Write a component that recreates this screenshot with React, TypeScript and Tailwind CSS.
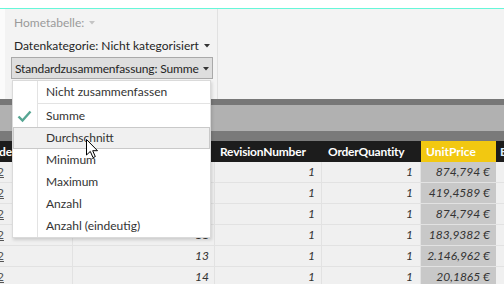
import React from "react";

const font = { fontFamily: 'Lato, "Open Sans", sans-serif' };

function Caret({ color }: { color: string }) {
  return (
    <svg width="6" height="4" viewBox="0 0 6 4" className="inline-block shrink-0">
      <path d="M0 0 L6 0 L3 3.5 Z" fill={color} />
    </svg>
  );
}

const rows = [
  { a: "8", p: "874,794 €" },
  { a: "9", p: "419,4589 €" },
  { a: "10", p: "874,794 €" },
  { a: "11", p: "183,9382 €" },
  { a: "13", p: "2.146,962 €" },
  { a: "14", p: "20,1865 €" },
];

export default function App() {
  return (
    <div className="relative w-[504px] h-[284px] overflow-hidden bg-white text-[12px] text-[#333] whitespace-nowrap" style={font}>
      <div className="h-[8px] bg-white" />
      <div className="h-[1px] bg-[#66f7d9]" />
      {/* ribbon */}
      <div className="flex h-[90px] bg-[#f3f3f3]">
        <div className="w-[5px] bg-[#fbfbfb]" />
        <div className="w-[213px] border-r border-[#e1e1e1] pl-[6px] pt-[5px] flex flex-col">
          <div className="h-[16px] pt-[2px] pl-[3px] text-[#9a9a9a] flex items-center gap-[5px]">
            <span>Hometabelle:</span>
            <Caret color="#c4c4c4" />
          </div>
          <div className="mt-[7px] h-[16px] pt-[1px] pl-[3px] text-[#252525] flex items-center gap-[5px]">
            <span>Datenkategorie: Nicht kategorisiert</span>
            <Caret color="#333" />
          </div>
          <div className="mt-[4px] h-[22px] w-[202px] border border-[#a9a9a9] bg-[#dedede] pl-[3px] pt-[1px] text-[#252525] flex items-center gap-[4px]">
            <span className="tracking-[-0.15px]">Standardzusammenfassung: Summe</span>
            <Caret color="#333" />
          </div>
        </div>
        <div className="flex-1" />
      </div>
      {/* bands */}
      <div className="h-[6px] bg-[#777777]" />
      <div className="h-[26px] bg-[#b1b1b1]" />
      <div className="h-[10px] bg-[#7a7a7a]" />
      {/* table header */}
      <div className="flex h-[21px] bg-[#1c1c1c] text-white font-bold items-center">
        <div className="w-[73px] shrink-0 overflow-hidden"><span className="ml-[-1px]">de</span></div>
        <div className="w-[142px] shrink-0" />
        <div className="w-[107px] shrink-0 pl-[5px] tracking-[-0.2px]">RevisionNumber</div>
        <div className="w-[99px] shrink-0 pl-[6px] tracking-[-0.2px]">OrderQuantity</div>
        <div className="w-[75px] shrink-0 h-full bg-[#f2c811] pl-[5px] flex items-center">UnitPrice</div>
        <div className="flex-1 pl-[4px] text-[#dfeeff]">E</div>
      </div>
      {rows.map((r, i) => (
        <div key={i} className="flex h-[21px] bg-[#f0f0f0] border-b border-[#e2e2e2] italic text-[#333]">
          <div className="w-[73px] shrink-0 border-r border-[#e2e2e2] flex items-center not-italic overflow-hidden">
            <span className="ml-[-3px] underline text-[#555]">2</span>
          </div>
          <div className="w-[142px] shrink-0 border-r border-[#e2e2e2] flex items-center justify-end pr-[5px]">{r.a}</div>
          <div className="w-[107px] shrink-0 border-r border-[#e2e2e2] flex items-center justify-end pr-[6px]">1</div>
          <div className="w-[99px] shrink-0 border-r border-[#e2e2e2] flex items-center justify-end pr-[7px]">1</div>
          <div className="w-[75px] shrink-0 bg-[#c8c8c8] flex items-center justify-end pr-[6px]">{r.p}</div>
          <div className="flex-1" />
        </div>
      ))}
      {/* dropdown menu */}
      <div className="absolute left-[12px] top-[80px] w-[199px] h-[158px] bg-white border border-[#dadada] shadow-[1px_2px_3px_rgba(0,0,0,0.15)]">
        <div className="absolute left-0 top-0 bottom-0 w-[25px] border-r border-[#e3e3e3]" />
        <div className="absolute inset-0 flex flex-col text-[#333]">
          <div className="h-[22px] flex items-center pl-[33px]">Nicht zusammenfassen</div>
          <div className="h-[2px] pl-[25px]"><div className="h-[1px] bg-[#e3e3e3]" /></div>
          <div className="h-[22px] flex items-center pl-[33px] relative">
            <svg className="absolute left-[4px] top-[5px]" width="15" height="13" viewBox="0 0 15 13">
              <path d="M1.5 6.5 L5.5 10.5 L13.5 1.5" fill="none" stroke="#56a693" strokeWidth="2.4" />
            </svg>
            Summe
          </div>
          <div className="h-[22px] flex items-center pl-[32px] border border-[#c9c9c9] bg-[#f0f0f0]">Durchschnitt</div>
          <div className="h-[22px] flex items-center pl-[33px]">Minimum</div>
          <div className="h-[22px] flex items-center pl-[33px]">Maximum</div>
          <div className="h-[22px] flex items-center pl-[33px]">Anzahl</div>
          <div className="h-[22px] flex items-center pl-[33px]">Anzahl (eindeutig)</div>
        </div>
      </div>
      {/* cursor */}
      <svg className="absolute left-[86px] top-[139px]" width="13" height="20" viewBox="0 0 13 20">
        <path d="M0.5 0.5 L0.5 16 L4.3 12.4 L7 18.6 L9.3 17.6 L6.7 11.7 L11.5 11.7 Z" fill="#fff" stroke="#000" strokeWidth="1" strokeLinejoin="round" />
      </svg>
    </div>
  );
}
